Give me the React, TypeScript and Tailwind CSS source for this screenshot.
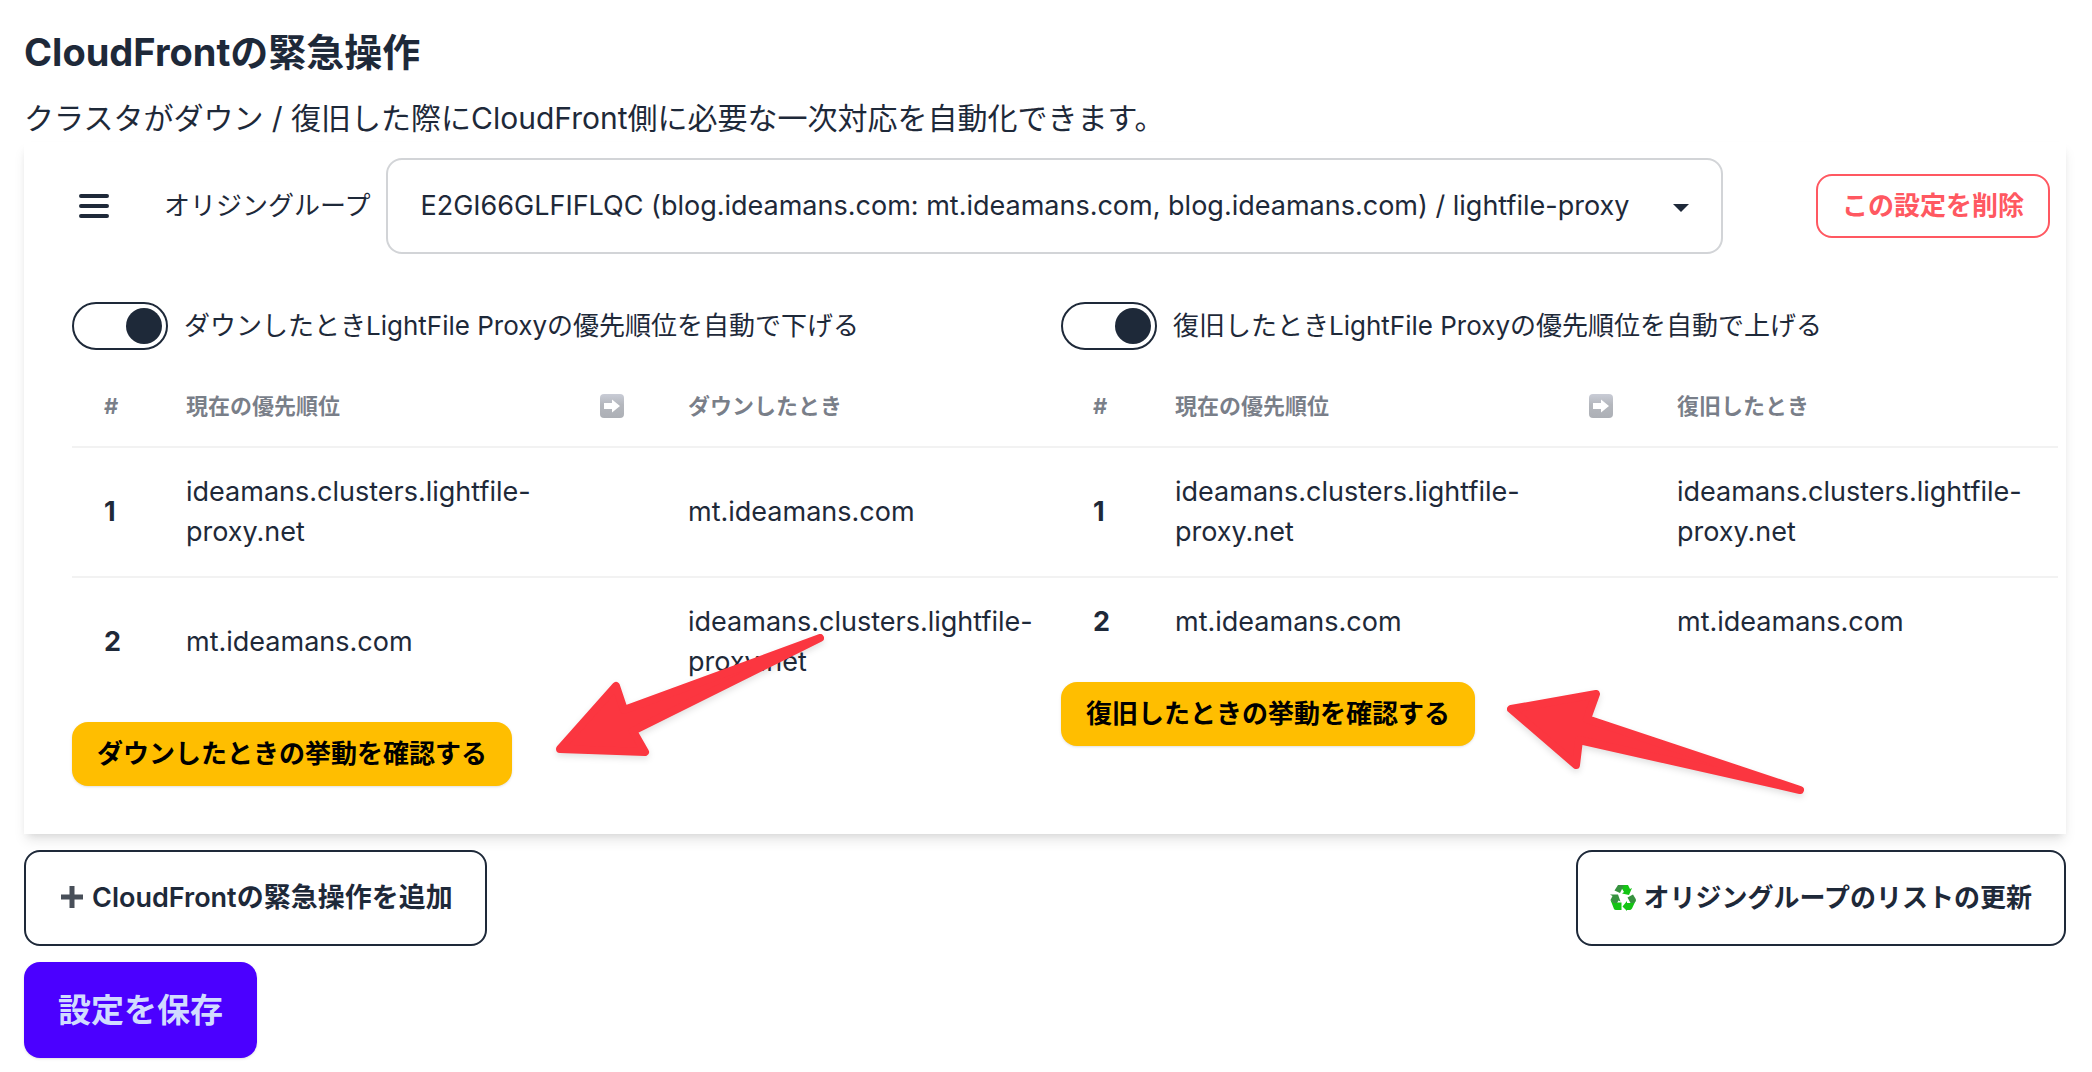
import { useState } from 'react'

type Priority = {
  current: string
  next: string
}

type OperationProps = {
  id: string
  label: string
  heading: string
  confirmLabel: string
  rows: Priority[]
}

const PROXY = 'ideamans.clusters.lightfile-proxy.net'
const ORIGIN = 'mt.ideamans.com'

const originGroups = [
  'E2GI66GLFIFLQC (blog.ideamans.com: mt.ideamans.com, blog.ideamans.com) / lightfile-proxy',
]

const operations: OperationProps[] = [
  {
    id: 'down',
    label: 'ダウンしたときLightFile Proxyの優先順位を自動で下げる',
    heading: 'ダウンしたとき',
    confirmLabel: 'ダウンしたときの挙動を確認する',
    rows: [
      { current: PROXY, next: ORIGIN },
      { current: ORIGIN, next: PROXY },
    ],
  },
  {
    id: 'recover',
    label: '復旧したときLightFile Proxyの優先順位を自動で上げる',
    heading: '復旧したとき',
    confirmLabel: '復旧したときの挙動を確認する',
    rows: [
      { current: PROXY, next: PROXY },
      { current: ORIGIN, next: ORIGIN },
    ],
  },
]

function ArrowEmoji() {
  return (
    <svg viewBox="0 0 24 24" className="size-6" role="img" aria-label="→">
      <defs>
        <linearGradient id="arrow-bg" x1="0" y1="0" x2="0" y2="1">
          <stop offset="0" stopColor="#c9ccd6" />
          <stop offset="0.45" stopColor="#b4b7bd" />
          <stop offset="1" stopColor="#adb0b6" />
        </linearGradient>
      </defs>
      <rect width="24" height="24" rx="4" fill="url(#arrow-bg)" />
      <path d="M4 9h8V5.500l8 6.500-8 6.500V15H4z" fill="#fff" />
    </svg>
  )
}

function RecycleEmoji() {
  return (
    <svg viewBox="0 0 26 26" className="size-[26px]" aria-hidden="true">
      <path d="M10 0h8l2 4 2-1-3 7-7-1.500 2-1.500-3-5z" fill="#14c414" />
      <path d="M8 0h6L10 8 4.500 5.500z" fill="#37923f" />
      <path d="M.5 15 4 17.500h7.500V25H6q-1.500 0-2-1z" fill="#14c414" />
      <path d="M0 9.500h8l2.500 7-2-1L7 18H3.500L.5 15l2-4z" fill="#37923f" />
      <path d="M12.500 21.500 17 16v2h5l4-3-4 8.500q-1 1.500-2.500 1.500H17v1z" fill="#14c414" />
      <path d="m17.500 12.500 5.500-3 3 5q0 2.500-3 3.500h-2.500z" fill="#37923f" />
    </svg>
  )
}

function Operation({ id, label, heading, confirmLabel, rows }: OperationProps) {
  const [enabled, setEnabled] = useState(true)

  return (
    <div className="min-w-0 flex-1">
      <div className="flex items-center gap-4">
        <input
          id={id}
          type="checkbox"
          checked={enabled}
          onChange={(e) => setEnabled(e.target.checked)}
          className="flex h-12 w-24 shrink-0 appearance-none items-center rounded-full border-2 border-gray-800 px-1 before:size-9 before:rounded-full before:bg-gray-800 before:content-[''] checked:justify-end"
        />
        <label htmlFor={id}>{label}</label>
      </div>
      {/* 表は列の幅より少しだけ広い */}
      <table className="mt-4 w-[calc(100%+8px)] table-fixed text-left">
        <colgroup>
          <col className="w-[82px]" />
          <col className="w-[414px]" />
          <col className="w-[88px]" />
          <col />
        </colgroup>
        <thead className="text-[22px] leading-8 text-gray-800/60">
          <tr className="border-b-2 border-[#f2f2f2]">
            <th className="px-8 py-6 font-bold">#</th>
            <th className="px-8 py-6 font-bold">現在の優先順位</th>
            <th className="px-8 py-6 font-bold">
              <ArrowEmoji />
            </th>
            <th className="px-8 py-6 font-bold">{heading}</th>
          </tr>
        </thead>
        <tbody className="text-[27px] leading-10">
          {rows.map((row, i) => (
            <tr key={i} className="border-b-2 border-[#f2f2f2] last:border-b-0">
              <th className="py-6 pl-8 font-bold">{i + 1}</th>
              <td className="py-6 pl-8">{row.current}</td>
              <td />
              <td className="py-6 pl-8">{row.next}</td>
            </tr>
          ))}
        </tbody>
      </table>
      <button
        type="button"
        className="mt-4 h-16 rounded-2xl bg-[#ffbe00] px-[25px] font-semibold text-black shadow-sm"
      >
        {confirmLabel}
      </button>
    </div>
  )
}

export default function App() {
  const [group, setGroup] = useState(originGroups[0])

  return (
    <main
      lang="ja"
      className="relative min-h-screen bg-white pt-6 pr-[26px] pb-3 pl-6 font-[Inter,'Noto_Sans_CJK_JP',sans-serif] text-[26px] leading-10 text-gray-800"
    >
      <h1 className="text-[38px] leading-14 font-bold">CloudFrontの緊急操作</h1>
      <p className="mt-3.5 text-[30px] leading-12">
        クラスタがダウン / 復旧した際にCloudFront側に必要な一次対応を自動化できます。
      </p>

      <section className="pt-4 pr-4 pb-12 pl-12 shadow-[0_8px_12px_-2px_rgba(0,0,0,0.1),0_4px_8px_-4px_rgba(0,0,0,0.1)]">
        <div className="flex items-center">
          <button type="button" aria-label="並べ替え" className="mr-12 p-1">
            <svg viewBox="0 0 36 36" className="size-9" fill="none" stroke="currentColor" strokeWidth="4" strokeLinecap="round">
              <path d="M5 8h26M5 18h26M5 28h26" />
            </svg>
          </button>
          <label htmlFor="origin-group" className="mr-4 shrink-0">
            オリジングループ
          </label>
          <div className="relative mr-[93px] min-w-0 flex-1">
            <select
              id="origin-group"
              value={group}
              onChange={(e) => setGroup(e.target.value)}
              className="h-24 w-full appearance-none rounded-2xl border-2 border-gray-800/20 bg-white pr-20 pl-8 text-[27px]"
            >
              {originGroups.map((name) => (
                <option key={name}>{name}</option>
              ))}
            </select>
            <svg viewBox="0 0 16 8" className="pointer-events-none absolute top-[46px] right-[34px] h-2 w-4" fill="currentColor">
              <path d="M0 0h16L8 8z" />
            </svg>
          </div>
          <button
            type="button"
            className="h-16 shrink-0 rounded-2xl border-2 border-[#ff5861] px-6 font-semibold text-[#ff5861]"
          >
            この設定を削除
          </button>
        </div>

        <div className="mt-12 flex items-start">
          {operations.map((operation) => (
            <Operation key={operation.id} {...operation} />
          ))}
        </div>
      </section>

      <div className="mt-4 flex justify-between">
        <button
          type="button"
          className="flex h-24 items-center gap-2 rounded-2xl border-2 border-gray-800 px-8 text-[27px] font-semibold"
        >
          <svg viewBox="0 0 26 26" className="size-[26px]" fill="none" stroke="#484f59" strokeWidth="5">
            <path d="M14 1v22M3 12h22" />
          </svg>
          CloudFrontの緊急操作を追加
        </button>
        <button
          type="button"
          className="flex h-24 items-center gap-2 rounded-2xl border-2 border-gray-800 px-8 font-semibold"
        >
          <RecycleEmoji />
          オリジングループのリストの更新
        </button>
      </div>

      <button
        type="button"
        className="mt-4 h-24 rounded-2xl bg-[#4b00ff] px-[34px] text-[33px] font-semibold text-[#d1dbff] shadow-sm"
      >
        設定を保存
      </button>

      {/* 確認ボタンを指す矢印 */}
      <svg
        viewBox="0 0 276 132"
        className="pointer-events-none absolute top-[630px] left-[552px] h-[132px] w-[276px] drop-shadow-md"
        fill="#fb3640"
        stroke="#fb3640"
        strokeWidth="8"
        strokeLinejoin="round"
      >
        <path d="M8 119 64 56 72 80 268 8 81 101 93 122z" />
      </svg>
      <svg
        viewBox="0 0 306 112"
        className="pointer-events-none absolute top-[686px] left-[1503px] h-[112px] w-[306px] drop-shadow-md"
        fill="#fb3640"
        stroke="#fb3640"
        strokeWidth="8"
        strokeLinejoin="round"
      >
        <path d="M8 23 93 8 84 33 297 104 76 54 73 79z" />
      </svg>
    </main>
  )
}
